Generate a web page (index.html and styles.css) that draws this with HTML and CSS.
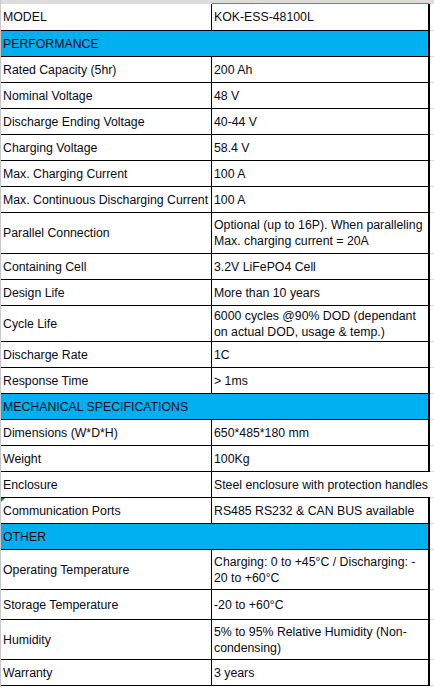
FILE: index.html
```html
<!DOCTYPE html>
<html>
<head>
<meta charset="utf-8">
<link rel="stylesheet" href="styles.css">
</head>
<body>
<div class="sheet">
  <div class="topbar"><div class="tb-left"></div><div class="tb-right"></div><div class="tb-gap"></div></div>

  <div class="row h27"><div class="c1">MODEL</div><div class="c2">KOK-ESS-48100L</div><div class="gap"></div></div>
  <div class="row section"><div class="sec">PERFORMANCE</div><div class="gap"></div></div>
  <div class="row"><div class="c1">Rated Capacity (5hr)</div><div class="c2">200 Ah</div><div class="gap"></div></div>
  <div class="row"><div class="c1">Nominal Voltage</div><div class="c2">48 V</div><div class="gap"></div></div>
  <div class="row"><div class="c1">Discharge Ending Voltage</div><div class="c2">40-44 V</div><div class="gap"></div></div>
  <div class="row"><div class="c1">Charging Voltage</div><div class="c2">58.4 V</div><div class="gap"></div></div>
  <div class="row"><div class="c1">Max. Charging Current</div><div class="c2">100 A</div><div class="gap"></div></div>
  <div class="row"><div class="c1">Max. Continuous Discharging Current</div><div class="c2">100 A</div><div class="gap"></div></div>
  <div class="row h41"><div class="c1">Parallel Connection</div><div class="c2">Optional (up to 16P). When paralleling<br>Max. charging current = 20A</div><div class="gap"></div></div>
  <div class="row"><div class="c1">Containing Cell</div><div class="c2">3.2V LiFePO4 Cell</div><div class="gap"></div></div>
  <div class="row"><div class="c1">Design Life</div><div class="c2">More than 10 years</div><div class="gap"></div></div>
  <div class="row h36"><div class="c1">Cycle Life</div><div class="c2">6000 cycles @90% DOD (dependant<br>on actual DOD, usage &amp; temp.)</div><div class="gap"></div></div>
  <div class="row"><div class="c1">Discharge Rate</div><div class="c2">1C</div><div class="gap"></div></div>
  <div class="row"><div class="c1">Response Time</div><div class="c2">&gt; 1ms</div><div class="gap"></div></div>
  <div class="row section"><div class="sec">MECHANICAL SPECIFICATIONS</div><div class="gap"></div></div>
  <div class="row"><div class="c1">Dimensions (W*D*H)</div><div class="c2">650*485*180 mm</div><div class="gap"></div></div>
  <div class="row"><div class="c1">Weight</div><div class="c2">100Kg</div><div class="gap"></div></div>
  <div class="row"><div class="c1">Enclosure</div><div class="c2 open">Steel enclosure with protection handles</div><div class="gap"></div></div>
  <div class="row"><div class="c1 flag">Communication Ports</div><div class="c2">RS485 RS232 &amp; CAN BUS available</div><div class="gap"></div></div>
  <div class="row section"><div class="sec">OTHER</div><div class="gap"></div></div>
  <div class="row h40"><div class="c1">Operating Temperature</div><div class="c2">Charging: 0 to +45°C / Discharging: -<br>20 to +60°C</div><div class="gap"></div></div>
  <div class="row h30"><div class="c1">Storage Temperature</div><div class="c2">-20 to +60°C</div><div class="gap"></div></div>
  <div class="row h40"><div class="c1">Humidity</div><div class="c2">5% to 95% Relative Humidity (Non-<br>condensing)</div><div class="gap"></div></div>
  <div class="row"><div class="c1">Warranty</div><div class="c2">3 years</div><div class="gap"></div></div>
  <div class="tail"></div>
</div>
</body>
</html>
```

FILE: styles.css
```css
* { box-sizing: border-box; }
html, body {
  margin: 0;
  padding: 0;
  background: #ffffff;
}
body {
  font-family: "Liberation Sans", Arial, sans-serif;
  font-size: 12.3px;
  line-height: 16px;
  color: #0a0a14;
  width: 434px;
  height: 687px;
  overflow: hidden;
}
.sheet {
  width: 434px;
  border-left: 1px solid #c8c8c8;
}
.topbar {
  display: grid;
  grid-template-columns: 211px 217px 1fr;
  height: 4px;
  background: #dcdcdc;
}
.tb-right {
  border-bottom: 1px solid #3ea34e;
}
.row {
  display: grid;
  grid-template-columns: 211px 218px 1fr;
  height: 26px;
}
.row.h27 { height: 27px; }
.row.h30 { height: 30px; }
.row.h36 { height: 36px; }
.row.h40 { height: 40px; }
.row.h41 { height: 41px; }
.c1, .c2, .sec {
  display: flex;
  align-items: center;
  padding-left: 2px;
  border-bottom: 1px solid #000;
  white-space: nowrap;
}
.c1 {
  border-right: 1px solid #000;
  position: relative;
}
.c2 {
  border-right: 2px solid #000;
  padding-left: 2px;
}
.c2.open {
  border-right: none;
  overflow: visible;
}
.sec {
  grid-column: span 2;
  background: #00b0f0;
  border-right: 2px solid #000;
}
.gap {
  border-bottom: 1px solid #d6d6d6;
}
.flag::before {
  content: "";
  position: absolute;
  left: 0;
  top: 0;
  border-top: 4px solid #1e7b34;
  border-right: 4px solid transparent;
}
.tail {
  height: 2px;
}
```
